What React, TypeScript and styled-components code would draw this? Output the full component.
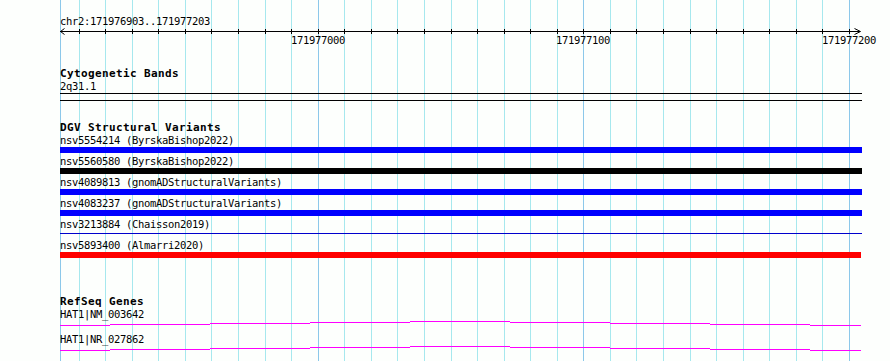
import React from "react";
import styled, { createGlobalStyle } from "styled-components";

const START = 171976903;
const END = 171977203;
const X0 = 60;
const SPAN = 797;
const xOf = (bp: number) => Math.round(X0 + ((bp - START) * SPAN) / (END - START));

const GlobalStyle = createGlobalStyle`
  html, body { margin: 0; padding: 0; background: #fdfffd; }
  body { width: 890px; height: 361px; overflow: hidden; }
`;

const Panel = styled.div`
  position: relative;
  width: 890px;
  height: 361px;
  box-sizing: border-box;
  padding: 15px 0 0 60px;
  background: #fdfffd;
  overflow: hidden;
  font-family: "DejaVu Sans Mono", "Liberation Mono", monospace;
  color: #000;
`;

const GridLayer = styled.svg`
  position: absolute;
  left: 0;
  top: 0;
  width: 890px;
  height: 361px;
  pointer-events: none;
`;

const Content = styled.div`
  position: relative;
  display: flex;
  flex-direction: column;
`;

const Label = styled.div`
  font-size: 10.5px;
  letter-spacing: -0.32px;
  line-height: 13px;
  height: 13px;
  white-space: pre;
`;

const TrackTitle = styled.div<{ $gap: number }>`
  margin-top: ${(p) => p.$gap}px;
  font-weight: bold;
  font-size: 11px;
  letter-spacing: 0.38px;
  line-height: 12px;
  height: 12px;
  white-space: pre;
`;

const RulerSvg = styled.svg`
  display: block;
  width: 830px;
  height: 22px;
  overflow: visible;
  font-family: "DejaVu Sans Mono", "Liberation Mono", monospace;
  font-size: 10.5px;
  letter-spacing: -0.32px;
`;

const Band = styled.div`
  box-sizing: border-box;
  width: 802px;
  height: 8px;
  border-top: 1px solid #000;
  border-bottom: 1px solid #000;
`;

const Feature = styled.div`
  display: flex;
  flex-direction: column;
`;

const Bar = styled.div<{ $color: string; $width: number; $thin?: boolean }>`
  width: ${(p) => p.$width}px;
  height: ${(p) => (p.$thin ? 1 : 6)}px;
  margin: ${(p) => (p.$thin ? "2px 0 5px" : "0 0 2px")};
  background: ${(p) => p.$color};
`;

const GeneSvg = styled.svg`
  display: block;
  width: 801px;
  height: 5px;
  margin-bottom: 7px;
`;

const gridBps: number[] = [];
for (let bp = 171976910; bp <= 171977200; bp += 10) gridBps.push(bp);

const variants = [
  { name: "nsv5554214 (ByrskaBishop2022)", color: "#0000ff", width: 802 },
  { name: "nsv5560580 (ByrskaBishop2022)", color: "#000000", width: 802 },
  { name: "nsv4089813 (gnomADStructuralVariants)", color: "#0000ff", width: 802 },
  { name: "nsv4083237 (gnomADStructuralVariants)", color: "#0000ff", width: 802 },
  { name: "nsv3213884 (Chaisson2019)", color: "#0000cc", width: 802, thin: true },
  { name: "nsv5893400 (Almarri2020)", color: "#ff0000", width: 801 },
];

const genes = ["HAT1|NM_003642", "HAT1|NR_027862"];

const hatSegments: [number, number, number][] = [
  [0, 50, 4],
  [50, 150, 3],
  [150, 250, 2],
  [250, 350, 1],
  [350, 450, 0],
  [450, 550, 1],
  [550, 650, 2],
  [650, 750, 3],
  [750, 801, 4],
];

const Grid = () => (
  <GridLayer viewBox="0 0 890 361" shapeRendering="crispEdges">
    <line x1={X0 + 0.5} y1={0} x2={X0 + 0.5} y2={361} stroke="#8cc8ea" strokeWidth={1} />
    {gridBps.map((bp) => {
      const x = xOf(bp) + 0.5;
      const major = bp % 100 === 0;
      return (
        <line key={bp} x1={x} y1={0} x2={x} y2={361} stroke={major ? "#8cc8ea" : "#a6e8ee"} strokeWidth={1} />
      );
    })}
  </GridLayer>
);

const Ruler = () => (
  <RulerSvg viewBox="0 0 830 22">
    <g stroke="#000" strokeWidth={1} fill="none" shapeRendering="crispEdges">
      <line x1={0} y1={3.5} x2={800} y2={3.5} />
      {gridBps.map((bp) => {
        const x = xOf(bp) - X0 + 0.5;
        return <line key={bp} x1={x} y1={1} x2={x} y2={6} />;
      })}
    </g>
    <g stroke="#000" strokeWidth={1} fill="none">
      <path d="M4.5 0.5 L0.5 3.5 L4.5 6.5" />
      <path d="M794.5 0.5 L800.5 3.5 L794.5 6.5" />
    </g>
    {[171977000, 171977100, 171977200].map((bp) => (
      <text key={bp} x={xOf(bp) - X0} y={16} textAnchor="middle" fill="#000">
        {bp}
      </text>
    ))}
  </RulerSvg>
);

const GeneModel = () => (
  <GeneSvg viewBox="0 0 801 5" shapeRendering="crispEdges">
    {hatSegments.map(([a, b, y]) => (
      <rect key={a} x={a} y={y} width={b - a} height={1} fill="#ff00ff" />
    ))}
  </GeneSvg>
);

export default function App() {
  return (
    <>
      <GlobalStyle />
      <Panel>
        <Grid />
        <Content>
          <Label>chr2:171976903..171977203</Label>
          <Ruler />

          <TrackTitle $gap={18}>Cytogenetic Bands</TrackTitle>
          <Label>2q31.1</Label>
          <Band />

          <TrackTitle $gap={21}>DGV Structural Variants</TrackTitle>
          {variants.map((v) => (
            <Feature key={v.name}>
              <Label>{v.name}</Label>
              <Bar $color={v.color} $width={v.width} $thin={v.thin} />
            </Feature>
          ))}

          <TrackTitle $gap={36}>RefSeq Genes</TrackTitle>
          {genes.map((g) => (
            <Feature key={g}>
              <Label>{g}</Label>
              <GeneModel />
            </Feature>
          ))}
        </Content>
      </Panel>
    </>
  );
}
